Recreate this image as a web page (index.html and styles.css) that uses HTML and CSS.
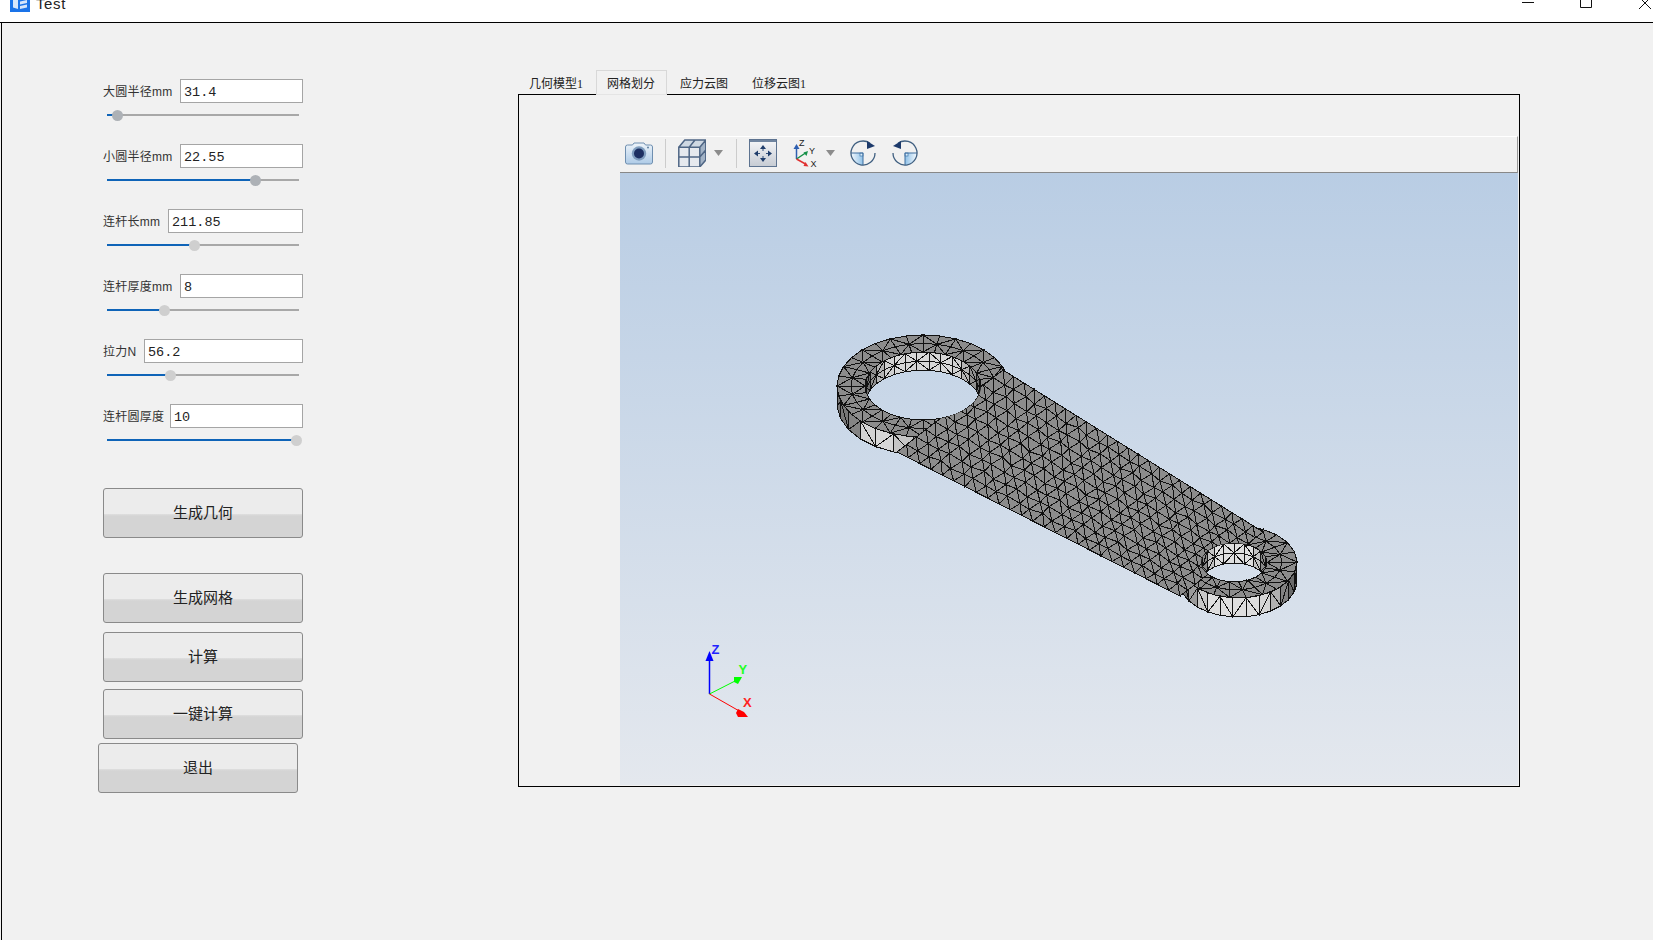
FILE: index.html
```html
<!DOCTYPE html>
<html lang="zh">
<head>
<meta charset="utf-8">
<title>Test</title>
<link rel="stylesheet" href="styles.css">
</head>
<body>
<div class="window">
  <header class="titlebar">
    <svg class="app-icon" viewBox="0 0 20 20"><rect width="20" height="20" fill="#1a73e8"/><path d="M3 3.500l5 1.500v12l-5-1.500zM10 5l7-1.500v3l-7 1.500zM10 9.500l7-1.500v3l-7 1.500zM10 14l7-1.500v3l-7 1.500z" fill="#d6e6fb"/></svg>
    <span class="app-title">Test</span>
    <div class="win-controls">
      <svg class="win-min" viewBox="0 0 12 12"><path d="M0 11.500h12" stroke="#111"/></svg>
      <svg class="win-max" viewBox="0 0 12 12"><path d="M.5 0v11.500h11V0" fill="none" stroke="#111"/></svg>
      <svg class="win-close" viewBox="0 0 12 12"><path d="M0 0l12 12M12 0L0 12" stroke="#111" fill="none"/></svg>
    </div>
  </header>
  <main class="main">
    <section class="panel">
      <div class="param">
        <div class="param-row"><label class="param-label">大圆半径mm</label><div class="param-input w123">31.4</div></div>
        <div class="slider"><div class="fill" style="width:5%"></div><div class="knob knob-dark" style="left:10px"></div></div>
      </div>
      <div class="param">
        <div class="param-row"><label class="param-label">小圆半径mm</label><div class="param-input w123">22.55</div></div>
        <div class="slider"><div class="fill" style="width:77%"></div><div class="knob knob-dark" style="left:148px"></div></div>
      </div>
      <div class="param">
        <div class="param-row"><label class="param-label">连杆长mm</label><div class="param-input w135">211.85</div></div>
        <div class="slider"><div class="fill" style="width:45%"></div><div class="knob" style="left:87px"></div></div>
      </div>
      <div class="param">
        <div class="param-row"><label class="param-label">连杆厚度mm</label><div class="param-input w123">8</div></div>
        <div class="slider"><div class="fill" style="width:30%"></div><div class="knob" style="left:57px"></div></div>
      </div>
      <div class="param">
        <div class="param-row"><label class="param-label">拉力N</label><div class="param-input w159">56.2</div></div>
        <div class="slider"><div class="fill" style="width:33%"></div><div class="knob" style="left:63px"></div></div>
      </div>
      <div class="param">
        <div class="param-row"><label class="param-label">连杆圆厚度</label><div class="param-input w133">10</div></div>
        <div class="slider"><div class="fill" style="width:98%"></div><div class="knob" style="left:189px"></div></div>
      </div>
      <button class="btn btn-geo">生成几何</button>
      <button class="btn btn-mesh">生成网格</button>
      <button class="btn btn-calc">计算</button>
      <button class="btn btn-one">一键计算</button>
      <button class="btn btn-exit">退出</button>
    </section>
    <section class="tabs">
      <nav class="tabbar">
        <span class="tab">几何模型1</span>
        <span class="tab tab-active">网格划分</span>
        <span class="tab">应力云图</span>
        <span class="tab">位移云图1</span>
      </nav>
      <div class="pane">
        <div class="toolbar">
          <svg class="ico ico-cam" viewBox="0 0 28 23">
            <defs><linearGradient id="camg" x1="0" y1="0" x2="0" y2="1"><stop offset="0" stop-color="#eef4fa"/><stop offset="1" stop-color="#aecbe7"/></linearGradient></defs>
            <path d="M2.500 3h5l1.500-2h10l1.500 2h5a2 2 0 0 1 2 2v15a2 2 0 0 1-2 2h-23a2 2 0 0 1-2-2v-15a2 2 0 0 1 2-2z" fill="url(#camg)" stroke="#6f8fb0"/>
            <circle cx="14" cy="11.500" r="7.200" fill="#7f9dbe"/>
            <circle cx="14" cy="11.500" r="5" fill="#1d2f62"/>
            <circle cx="23" cy="5.500" r="1" fill="#5f7f9f"/>
          </svg>
          <span class="sep"></span>
          <svg class="ico ico-cube" viewBox="0 0 28 28">
            <path d="M.8 8.300L6.800 1h21l-6 7.300z" fill="#cfd8e2"/>
            <path d="M.8 8.300h21v19.700H.8z" fill="#e6e9ee"/>
            <path d="M21.800 8.300l6-7.300v20l-6 7z" fill="#a3b3c6"/>
            <path d="M.8 8.300h21v19.700H.8zM.8 8.300L6.800 1h21l-6 7.300M27.800 1v20l-6 7M11.200 8.300V28M.8 18h21M21.800 18l6-7M11.200 8.300L17 1" fill="none" stroke="#4f6685" stroke-width="1.500"/>
          </svg>
          <svg class="caret" viewBox="0 0 9 6"><path d="M0 0h9L4.500 6z" fill="#8c8c8c"/></svg>
          <span class="sep sep2"></span>
          <svg class="ico ico-fit" viewBox="0 0 28 28">
            <defs><linearGradient id="fitg" x1="0" y1="0" x2="0" y2="1"><stop offset="0" stop-color="#f6f7f9"/><stop offset="1" stop-color="#c6cbd3"/></linearGradient></defs>
            <rect x=".5" y=".5" width="27" height="27" fill="url(#fitg)" stroke="#5d7390"/>
            <rect x="1" y="1" width="26" height="2" fill="#6f849f"/>
            <path d="M14 9v3M14 17v3M8 14.500h3M17 14.500h3" stroke="#33507a"/>
            <path d="M14 6l3 4h-6zM14 23l3-4h-6zM5 14.500l4-3v6zM23 14.500l-4-3v6z" fill="#1f3d6b"/>
          </svg>
          <svg class="ico ico-axes" viewBox="0 0 24 28">
            <path d="M3.500 20V8" stroke="#2f5fb0" stroke-width="1.500"/>
            <path d="M3.500 5l3 5h-6z" fill="#2f5fb0"/>
            <path d="M3.500 20l9-6" stroke="#159048" stroke-width="1.500"/>
            <path d="M15 12l-1.500 5-3-3.500z" fill="#159048"/>
            <path d="M3.500 20l9 5" stroke="#e03030" stroke-width="1.500"/>
            <path d="M15.500 27.500l-5-.5 2-4z" fill="#e03030"/>
            <text class="axis-small" x="6" y="7">Z</text>
            <text class="axis-small" x="16" y="15">Y</text>
            <text class="axis-small" x="17.500" y="27.500">X</text>
          </svg>
          <svg class="caret caret2" viewBox="0 0 9 6"><path d="M0 0h9L4.500 6z" fill="#8c8c8c"/></svg>
          <svg class="ico ico-rot" viewBox="0 0 26 26">
            <defs>
              <linearGradient id="rotL" x1="0" y1="0" x2="1" y2="0"><stop offset="0" stop-color="#f4f9fd"/><stop offset="1" stop-color="#8fc1e8"/></linearGradient>
              <linearGradient id="rotR" x1="0" y1="0" x2="1" y2="0"><stop offset="0" stop-color="#8fc1e8"/><stop offset="1" stop-color="#f4f9fd"/></linearGradient>
            </defs>
            <path d="M13 13H1A12 12 0 0 0 13 25z" fill="url(#rotL)"/>
            <rect x="10" y="13" width="3" height="3" fill="#dcecf8" stroke="#3f78ad" stroke-width=".7"/>
            <path d="M1 13H13V25" stroke="#3f6f9f" fill="none"/>
            <path d="M25 13A12 12 0 1 1 20 3.300" fill="none" stroke="#3f5f80" stroke-width="1.300"/>
            <path d="M17 1L25 6l-8 3z" fill="#1d3a6b"/>
          </svg>
          <svg class="ico ico-rot ico-rot2" viewBox="0 0 26 26">
            <path d="M13 13H25A12 12 0 0 1 13 25z" fill="url(#rotR)"/>
            <rect x="13" y="13" width="3" height="3" fill="#dcecf8" stroke="#3f78ad" stroke-width=".7"/>
            <path d="M25 13H13V25" stroke="#3f6f9f" fill="none"/>
            <path d="M1 13A12 12 0 1 0 6 3.300" fill="none" stroke="#3f5f80" stroke-width="1.300"/>
            <path d="M9 1L1 6l8 3z" fill="#1d3a6b"/>
          </svg>
        </div>
        <div class="viewport">
          <svg class="scene" viewBox="620 173 898 612" preserveAspectRatio="none">
            <defs>
              <clipPath id="noholes"><path clip-rule="evenodd" d="M620 173h898v612H620z M865 386a58 34 0 1 0 116 0a58 34 0 1 0-116 0z M1201 562.500a33 19.500 0 1 0 66 0a33 19.500 0 1 0-66 0z"/></clipPath>
            </defs>
            <g id="mesh" class="mesh"></g>
            <g class="triad">
              <path class="ax-z" d="M709.500 694V660"/>
              <path class="ax-z-h" d="M709.500 651l2 5 2 5h-8l2-5z"/>
              <path class="ax-y" d="M709.500 694L737 680"/>
              <path class="ax-y-h" d="M734 677h8l-4 7-4-2z"/>
              <path class="ax-x" d="M709.500 694L741 712"/>
              <path class="ax-x-h" d="M738 709l6 3 4 5h-10l-2-4z"/>
              <text class="lbl-z" x="711.500" y="654">Z</text>
              <text class="lbl-y" x="738.500" y="674">Y</text>
              <text class="lbl-x" x="743" y="707">X</text>
            </g>
          </svg>
        </div>
      </div>
    </section>
  </main>
</div>
<script src="mesh.js"></script>
</body>
</html>
```
FILE: styles.css
```css
* { box-sizing: border-box; }
html, body { margin: 0; padding: 0; height: 100%; overflow: hidden; }
body { background: #f1f1f1; font-family: "Liberation Sans", "Noto Sans CJK SC", sans-serif; color: #222; }
.window { width: 1653px; height: 940px; display: flex; flex-direction: column; }
.titlebar { height: 23px; background: #fff; border-bottom: 1px solid #000; display: flex; align-items: flex-end; padding: 0 0 10px 10px; overflow: hidden; flex: none; }
.app-icon { width: 20px; height: 20px; flex: none; }
.app-title { font-size: 15px; line-height: 15px; margin-left: 6px; color: #222; margin-bottom: 1px; letter-spacing: .6px; }
.win-controls { margin-left: auto; display: flex; align-items: flex-end; }
.win-min { width: 12px; height: 12px; margin-bottom: 9px; }
.win-max { width: 12px; height: 12px; margin-left: 46px; margin-bottom: 4px; }
.win-close { width: 12px; height: 12px; margin-left: 47px; margin-right: 2px; margin-bottom: 3px; }

.main { flex: 1; display: flex; border-left: 1px solid #000; margin-left: 1px; background: #f1f1f1; }
.panel { width: 200px; margin-left: 101px; padding-top: 56px; display: flex; flex-direction: column; flex: none; }
.param { height: 65px; }
.param-row { display: flex; align-items: center; justify-content: space-between; height: 24px; }
.param-label { font-size: 12px; color: #333; white-space: nowrap; margin-bottom: 1px; letter-spacing: .25px; }
.param-input { height: 24px; background: #fff; border: 1px solid #a5a5a5; font-family: "Liberation Mono", monospace; font-size: 13.500px; line-height: 24px; padding: 1px 0 0 3px; color: #222; }
.w123 { width: 123px; }
.w135 { width: 135px; }
.w159 { width: 159px; }
.w133 { width: 133px; }
.slider { position: relative; height: 2px; width: 192px; margin: 11px 0 0 4px; background: #a8a8a8; }
.fill { height: 2px; background: #0f64b8; }
.knob { position: absolute; top: -4.500px; width: 11px; height: 11px; margin-left: -5.500px; border-radius: 50%; background: #cfcfcf; }
.knob-dark { background: #adb1b6; }

.btn { width: 200px; height: 50px; flex: none; padding: 0 0 3px; border: 1px solid #8a8a8a; border-radius: 3px; background: linear-gradient(#ececec 0, #ececec 25px, #dfdfdf 25px, #d4d4d4 27px, #d4d4d4 100%); font-family: "Noto Sans CJK SC", sans-serif; font-size: 15px; color: #222; }
.btn-geo { margin-top: 19px; }
.btn-mesh { margin-top: 35px; }
.btn-calc { margin-top: 9px; }
.btn-one { margin-top: 7px; }
.btn-exit { margin-top: 4px; margin-left: -5px; }

.tabs { margin-left: 215px; width: 1002px; padding-top: 47px; display: flex; flex-direction: column; flex: none; }
.tabbar { display: flex; height: 24px; gap: 2px; position: relative; z-index: 1; }
.tab { padding: 3px 11px 0; height: 25px; line-height: 23px; font-family: "Liberation Serif", "Noto Sans CJK SC", serif; font-size: 12px; color: #222; white-space: nowrap; }
.tab-active { background: #f1f1f1; border: 1px solid #d8d8d8; border-bottom: 1px solid #e4e4e4; padding: 2px 11px 0 10px; }
.pane { height: 693px; border: 1px solid #000; padding: 41px 1px 1px 101px; display: flex; flex-direction: column; }
.toolbar { height: 37px; flex: none; display: flex; align-items: center; padding-bottom: 3px; background: #f1f1f1; border-top: 1px solid #fff; border-bottom: 1px solid #888; border-right: 1px solid #999; }
.ico { display: block; flex: none; }
.ico-cam { width: 28px; height: 23px; margin-left: 5px; }
.sep { width: 1px; height: 29px; background: #ccc; margin-left: 12px; flex: none; }
.sep2 { margin-left: 13px; }
.ico-cube { width: 28px; height: 28px; margin-left: 12px; }
.caret { width: 9px; height: 6px; margin-left: 8px; flex: none; }
.ico-fit { width: 28px; height: 28px; margin-left: 12px; }
.ico-axes { width: 24px; height: 28px; margin-left: 16px; }
.caret2 { margin-left: 9px; }
.ico-rot { width: 26px; height: 26px; margin-left: 15px; }
.ico-rot2 { margin-left: 16px; }
.axis-small { font-family: "Liberation Sans", sans-serif; font-size: 9px; fill: #222; }

.viewport { flex: 1; background: linear-gradient(#b9cde4 0, #e4e8ee 100%); overflow: hidden; }
.scene { display: block; width: 100%; height: 100%; }
.mesh { stroke: #111; stroke-width: 1; stroke-linejoin: miter; shape-rendering: crispEdges; }
.triad path { fill: none; stroke-width: 1; }
.triad .ax-z { stroke: #0000ff; stroke-width: 1.500px; }
.triad .ax-y { stroke: #00ff00; }
.triad .ax-x { stroke: #ff0000; }
.triad .ax-z-h { fill: #0000ff; stroke: none; }
.triad .ax-y-h { fill: #00ff00; stroke: none; }
.triad .ax-x-h { fill: #ff0000; stroke: none; }
.triad text { font-family: "Liberation Sans", sans-serif; font-weight: bold; font-size: 13px; }
.lbl-z { fill: #2222ff; }
.lbl-y { fill: #22ff22; }
.lbl-x { fill: #ff2222; }
```
FILE: mesh.js
```js
// Builds the triangulated connecting-rod mesh shown in the 3D view.
(function () {
  var NS = 'http://www.w3.org/2000/svg';
  var root = document.getElementById('mesh');
  var TOP = '#8c8c8c';

  function tri(parent, a, b, c, fill) {
    var p = document.createElementNS(NS, 'polygon');
    p.setAttribute('points', [a, b, c].map(function (q) { return q[0].toFixed(1) + ',' + q[1].toFixed(1); }).join(' '));
    p.setAttribute('fill', fill);
    parent.appendChild(p);
  }

  function surf(parent, fn, nu, nv, shade, uniform) {
    for (var i = 0; i < nu; i++) {
      for (var j = 0; j < nv; j++) {
        var a = fn(i / nu, j / nv), b = fn((i + 1) / nu, j / nv);
        var c = fn((i + 1) / nu, (j + 1) / nv), d = fn(i / nu, (j + 1) / nv);
        var f = shade((i + 0.5) / nu);
        if (uniform || (i + j) % 2 === 0) { tri(parent, a, b, c, f); tri(parent, a, c, d, f); }
        else { tri(parent, a, b, d, f); tri(parent, b, c, d, f); }
      }
    }
  }

  function gray(v) {
    v = Math.round(Math.max(70, Math.min(225, v)));
    return 'rgb(' + v + ',' + v + ',' + v + ')';
  }
  var rad = Math.PI / 180;

  function smooth(k) {
    k = Math.max(0, Math.min(1, k));
    return k * k * (3 - 2 * k);
  }

  function wall(c, rx, ry, h, from, to, n, rows, peak, width, lo, hi) {
    surf(root, function (u, v) {
      var t = (from + (to - from) * u) * rad;
      return [c[0] + rx * Math.cos(t), c[1] + ry * Math.sin(t) + v * h];
    }, n, rows, function (u) {
      var t = from + (to - from) * u;
      var k = 1 - Math.abs(t - peak) / width;
      return gray(lo + (hi - lo) * smooth(k / 0.7));
    });
  }

  function annulus(co, ro, ci, ri, rows, n) {
    surf(root, function (u, v) {
      var t = u * 360 * rad, k = v;
      var cx = ci[0] + (co[0] - ci[0]) * k, cy = ci[1] + (co[1] - ci[1]) * k;
      var rx = ri[0] + (ro[0] - ri[0]) * k, ry = ri[1] + (ro[1] - ri[1]) * k;
      return [cx + rx * Math.cos(t), cy + ry * Math.sin(t)];
    }, n, rows, function () { return TOP; });
  }

  // outer side walls
  wall([923, 386], 86, 51, 18, 190, 70, 9, 1, 118, 30, 120, 215);
  wall([1238, 562], 59, 36, 19, 185, -8, 15, 1, 92, 70, 105, 222);
  // visible inner walls of the two holes
  wall([923, 386], 58, 34, 18, 180, 360, 15, 2, 270, 90, 85, 215);
  wall([1234, 562.5], 33, 19.5, 20, 180, 360, 10, 2, 270, 90, 85, 222);
  // top faces of the two rings
  annulus([923, 386], [86, 51], [923, 386], [58, 34], 2, 32);
  annulus([1238, 562], [59, 36], [1234, 562.5], [33, 19.5], 2, 22);

  // the shaft between the rings, cut around the holes
  var shaft = document.createElementNS(NS, 'g');
  shaft.setAttribute('clip-path', 'url(#noholes)');
  root.appendChild(shaft);
  var P0 = [1003, 370], P1 = [1263, 532], P2 = [1180, 596], P3 = [897, 452];
  surf(shaft, function (u, v) {
    var tx = P0[0] + (P1[0] - P0[0]) * u, ty = P0[1] + (P1[1] - P0[1]) * u;
    var bx = P3[0] + (P2[0] - P3[0]) * u, by = P3[1] + (P2[1] - P3[1]) * u;
    var x = tx + (bx - tx) * v, y = ty + (by - ty) * v;
    // the mesher's vertices are not on a perfect lattice
    if (u > 0 && u < 1 && v > 0 && v < 1) {
      x += 1.3 * Math.sin(u * 91 + v * 37);
      y += 1.3 * Math.sin(u * 53 - v * 71);
    }
    return [x, y];
  }, 25, 11, function () { return TOP; }, true);
})();
```
